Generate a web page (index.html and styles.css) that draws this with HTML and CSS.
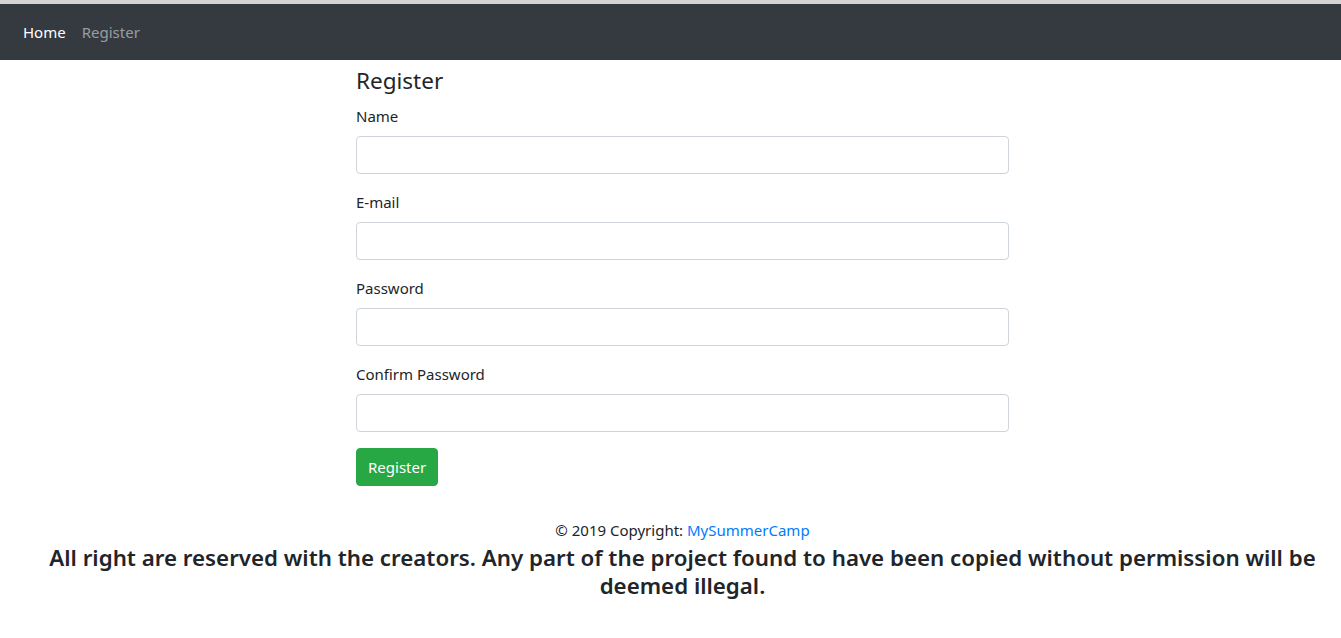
FILE: index.html
```html
<!DOCTYPE html>
<html lang="en">
<head>
<meta charset="utf-8">
<title>Register</title>
<link rel="stylesheet" href="styles.css">
</head>
<body>
<div class="topline"></div>
<nav class="navbar">
  <a class="nav-link active" href="#">Home</a>
  <a class="nav-link" href="#">Register</a>
</nav>
<main class="content">
  <form class="reg-form">
    <h4 class="title">Register</h4>
    <div class="form-group">
      <label>Name</label>
      <input class="form-control" type="text">
    </div>
    <div class="form-group">
      <label>E-mail</label>
      <input class="form-control" type="email">
    </div>
    <div class="form-group">
      <label>Password</label>
      <input class="form-control" type="password">
    </div>
    <div class="form-group">
      <label>Confirm Password</label>
      <input class="form-control" type="password">
    </div>
    <button class="btn-success" type="button">Register</button>
  </form>
  <footer class="footer">
    <div class="copy">© 2019 Copyright: <a href="#">MySummerCamp</a></div>
    <h4 class="rights">All right are reserved with the creators. Any part of the project found to have been copied without permission will be deemed illegal.</h4>
  </footer>
</main>
</body>
</html>
```

FILE: styles.css
```css
* { box-sizing: border-box; }
html, body { margin: 0; padding: 0; }
body {
  font-family: "Noto Sans", "Open Sans", sans-serif;
  font-size: 15px;
  line-height: 24px;
  color: #212529;
  background: #fff;
}
.topline { height: 4px; background: #d4d4d4; }
.navbar {
  height: 56px;
  background: #343a40;
  display: flex;
  align-items: center;
  padding: 0 15px;
}
.nav-link {
  color: rgba(255,255,255,.5);
  text-decoration: none;
  padding: 8px;
  font-size: 15px;
}
.nav-link.active { color: #fff; }
.content {
  padding-left: 24px;
  display: flex;
  flex-direction: column;
  align-items: center;
}
.reg-form { width: 653px; padding-top: 6px; }
.title {
  margin: 0 0 9px;
  font-size: 22.5px;
  font-weight: 400;
  line-height: 29px;
}
.form-group { margin-bottom: 16px; display: flex; flex-direction: column; }
label { display: block; margin-bottom: 8px; font-size: 15px; }
.form-control {
  height: 38px;
  width: 100%;
  border: 1px solid #ced4da;
  border-radius: 4px;
  background: #fff;
  font: inherit;
  padding: 6px 12px;
}
.btn-success {
  height: 38px;
  background: #28a745;
  border: 1px solid #28a745;
  color: #fff;
  border-radius: 4px;
  font: inherit;
  font-size: 15px;
  padding: 0 11px;
}
.footer { text-align: center; margin-top: 32px; width: 100%; }
.copy { font-size: 15px; line-height: 24px; }
.copy a { color: #007bff; text-decoration: none; }
.rights {
  margin: 2px 0 0;
  font-size: 22.3px;
  line-height: 28px;
  font-weight: 600;
  padding: 0 8px;
}
```
